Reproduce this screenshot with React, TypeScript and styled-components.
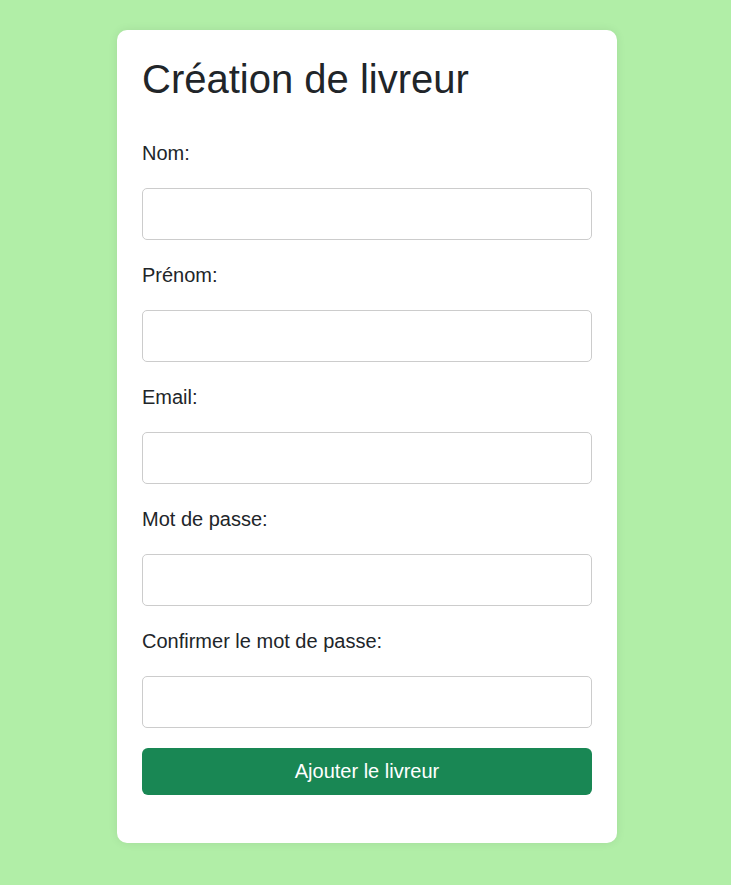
import styled, { createGlobalStyle } from "styled-components";

const GlobalStyle = createGlobalStyle`
  body {
    margin: 0;
    background-color: #b1eea7;
    font-family: "Liberation Sans", Arial, sans-serif;
    color: #212529;
  }
`;

const Page = styled.div`
  display: flex;
  justify-content: center;
  padding: 30px 0 42px 3px;
`;

const Card = styled.div`
  width: 500px;
  box-sizing: border-box;
  background-color: #fff;
  border-radius: 10px;
  padding: 25px 25px 48px;
  box-shadow: 0 0 10px rgba(0, 0, 0, 0.08);
`;

const Title = styled.h1`
  font-size: 40px;
  font-weight: 400;
  line-height: 1.2;
  margin: 0 0 35px;
`;

const Form = styled.form`
  display: flex;
  flex-direction: column;
`;

const Label = styled.label`
  display: block;
  font-size: 20px;
  line-height: 30px;
  margin-bottom: 20px;
`;

const Input = styled.input`
  display: block;
  width: 100%;
  height: 52px;
  box-sizing: border-box;
  border: 1px solid #ccc;
  border-radius: 5px;
  padding: 10px;
  font-size: 18px;
  margin-bottom: 20px;
`;

const Button = styled.button`
  height: 47px;
  border: none;
  border-radius: 6px;
  background-color: #198754;
  color: #fff;
  font-family: "Liberation Sans", Arial, sans-serif;
  font-size: 20px;
  cursor: pointer;
`;

const fields = [
  { id: "nom", label: "Nom:", type: "text" },
  { id: "prenom", label: "Prénom:", type: "text" },
  { id: "email", label: "Email:", type: "email" },
  { id: "password", label: "Mot de passe:", type: "password" },
  { id: "confirm", label: "Confirmer le mot de passe:", type: "password" },
];

export default function App() {
  return (
    <>
      <GlobalStyle />
      <Page>
        <Card>
          <Title>Création de livreur</Title>
          <Form onSubmit={(e) => e.preventDefault()}>
            {fields.map((f) => (
              <div key={f.id}>
                <Label htmlFor={f.id}>{f.label}</Label>
                <Input id={f.id} type={f.type} />
              </div>
            ))}
            <Button type="submit">Ajouter le livreur</Button>
          </Form>
        </Card>
      </Page>
    </>
  );
}
